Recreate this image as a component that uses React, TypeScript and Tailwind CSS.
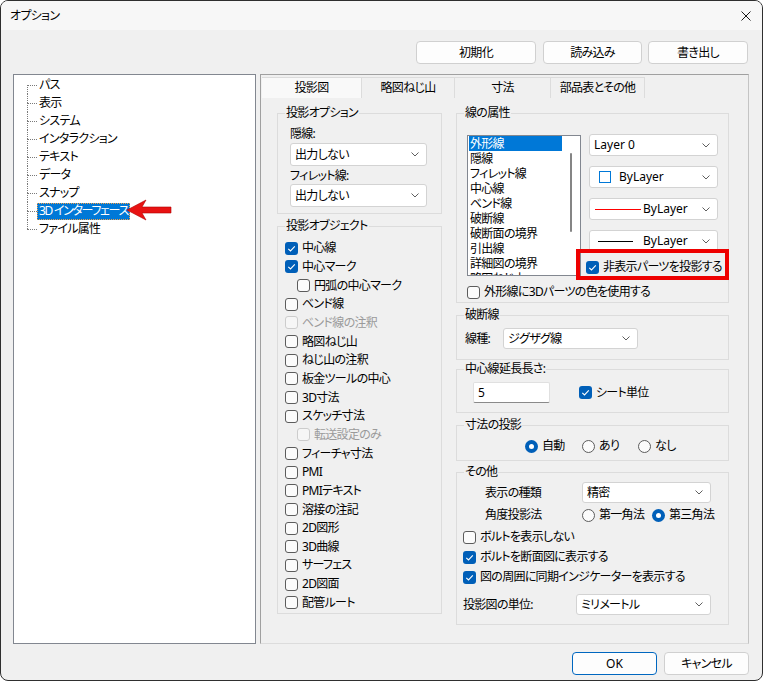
import React from "react";

const treeItems = ["パス", "表示", "システム", "インタラクション", "テキスト", "データ", "スナップ", "3D インターフェース", "ファイル属性"];

const objRows: { label: string; state?: "on" | "dis"; indent?: boolean }[] = [
  { label: "中心線", state: "on" },
  { label: "中心マーク", state: "on" },
  { label: "円弧の中心マーク", indent: true },
  { label: "ベンド線" },
  { label: "ベンド線の注釈", state: "dis" },
  { label: "略図ねじ山" },
  { label: "ねじ山の注釈" },
  { label: "板金ツールの中心" },
  { label: "3D寸法" },
  { label: "スケッチ寸法" },
  { label: "転送設定のみ", state: "dis", indent: true },
  { label: "フィーチャ寸法" },
  { label: "PMI" },
  { label: "PMIテキスト" },
  { label: "溶接の注記" },
  { label: "2D図形" },
  { label: "3D曲線" },
  { label: "サーフェス" },
  { label: "2D図面" },
  { label: "配管ルート" },
];

const lineTypes = ["外形線", "隠線", "フィレット線", "中心線", "ベンド線", "破断線", "破断面の境界", "引出線", "詳細図の境界", "略図ねじ山"];

function Chevron() {
  return (
    <svg width="8" height="5" viewBox="0 0 8 5" className="shrink-0">
      <path d="M0.5 0.5L4 4L7.5 0.5" fill="none" stroke="#5f5f5f" strokeWidth="1" />
    </svg>
  );
}

function Combo({ className, children }: { className: string; children: React.ReactNode }) {
  return (
    <div className={`flex items-center bg-white border border-[#d3d3d3] rounded-[3px] pl-[4px] pr-[7px] ${className}`}>
      <div className="flex-1 flex items-center whitespace-nowrap">{children}</div>
      <Chevron />
    </div>
  );
}

function Check({ label, state, className = "" }: { label: string; state?: "on" | "dis"; className?: string }) {
  const box =
    state === "on"
      ? "bg-[#005fb8]"
      : state === "dis"
      ? "border border-[#cccccc] bg-[#f6f6f6]"
      : "border border-[#5c5c5c] bg-[#fbfbfb]";
  return (
    <div className={`flex items-center ${className}`}>
      <span className={`w-[13px] h-[13px] rounded-[3px] flex items-center justify-center shrink-0 ${box}`}>
        {state === "on" && (
          <svg width="13" height="13" viewBox="0 0 13 13">
            <path d="M3.3 6.8L5.5 9L9.8 4.4" fill="none" stroke="white" strokeWidth="1.1" />
          </svg>
        )}
      </span>
      <span className={`ml-[4px] whitespace-nowrap ${state === "dis" ? "text-[#9a9a9a]" : ""}`}>{label}</span>
    </div>
  );
}

function Radio({ label, on, className = "" }: { label: string; on?: boolean; className?: string }) {
  return (
    <div className={`flex items-center ${className}`}>
      {on ? (
        <span className="w-[13px] h-[13px] rounded-full bg-[#005fb8] flex items-center justify-center shrink-0">
          <span className="w-[5px] h-[5px] rounded-full bg-white" />
        </span>
      ) : (
        <span className="w-[13px] h-[13px] rounded-full border border-[#5c5c5c] bg-[#fbfbfb] shrink-0" />
      )}
      <span className="ml-[4px] whitespace-nowrap">{label}</span>
    </div>
  );
}

// group box: legend sits on the border, content padding goes on the inner div
function Group({ title, className, inner, children }: { title: string; className: string; inner: string; children: React.ReactNode }) {
  return (
    <fieldset className={`border border-[#dcdcdc] min-w-0 ${className}`}>
      <legend className="ml-[7px] px-[1px] leading-[16px]">{title}</legend>
      <div className={inner}>{children}</div>
    </fieldset>
  );
}

function Button({ label, className }: { label: string; className: string }) {
  return (
    <div className={`h-[23px] flex items-center justify-center bg-[#fdfdfd] rounded-[4px] ${className}`}>{label}</div>
  );
}

export default function App() {
  return (
    <div className="w-[763px] h-[681px] bg-white">
      <div className="w-[763px] h-[681px] rounded-[8px] border border-[#2f2f2f] bg-[#f0f0f0] overflow-hidden flex flex-col text-[12px] leading-[16px] tracking-[-0.7px] text-black font-['Noto_Sans','Noto_Sans_CJK_JP',sans-serif] [font-feature-settings:'palt']">
        {/* title bar */}
        <div className="h-[29px] shrink-0 bg-[#f7f7f7] flex items-center justify-between pl-[9px] pr-[11px]">
          <span>オプション</span>
          <svg width="10" height="10" viewBox="0 0 10 10">
            <path d="M0.5 0.5L9.5 9.5M9.5 0.5L0.5 9.5" stroke="#1a1a1a" strokeWidth="1" />
          </svg>
        </div>

        <div className="flex flex-col pl-[12px] pr-[13px]">
          {/* top buttons */}
          <div className="flex justify-end mt-[11px] mr-[1px]">
            <Button label="初期化" className="w-[120px] border border-[#d0d0d0]" />
            <Button label="読み込み" className="w-[99px] ml-[7px] border border-[#d0d0d0]" />
            <Button label="書き出し" className="w-[100px] ml-[6px] border border-[#d0d0d0]" />
          </div>

          <div className="flex mt-[10px] h-[570px]">
            {/* tree */}
            <div className="relative w-[243px] h-[570px] bg-white border border-[#828790] pt-[1px] pl-[13px]">
              {treeItems.map((t, i) => {
                const first = i === 0;
                const last = i === treeItems.length - 1;
                const sel = i === 7;
                return (
                  <div key={t} className="flex h-[18px] items-center">
                    <div className="flex flex-col self-stretch w-[10px]">
                      <div className={`h-[9px] ${first ? "" : "border-l border-dotted border-[#7a7a7a]"}`} />
                      <div className={`h-[9px] border-t border-dotted border-[#7a7a7a] ${last ? "" : "border-l"}`} />
                    </div>
                    {sel ? (
                      <span className="h-[17px] flex items-center px-[1px] bg-[#0078d7] text-white border border-dotted border-[#f0a04a] whitespace-nowrap tracking-[-1.3px]">
                        {t}
                      </span>
                    ) : (
                      <span className="px-[2px] whitespace-nowrap">{t}</span>
                    )}
                  </div>
                );
              })}
              <svg width="46" height="22" viewBox="0 0 46 22" className="absolute left-[112px] top-[124px]">
                <polygon points="1,11 20,1 16,8 45,8 45,14 16,14 20,21" fill="#e81212" stroke="#b00000" strokeWidth="0.6" />
              </svg>
            </div>

            {/* tab frame */}
            <div className="ml-[4px] w-[489px] h-[570px] border border-[#a0a0a0] border-b-[#dcdcdc] border-r-[#c4c4c4] pt-[2px] pl-[1px] flex flex-col">
              <div className="flex h-[21px]">
                <div className="w-[100px] flex items-center justify-center bg-[#f9f9f9] border-t border-r border-[#dcdcdc]">投影図</div>
                <div className="w-[93px] flex items-center justify-center border-t border-r border-[#dcdcdc]">略図ねじ山</div>
                <div className="w-[96px] flex items-center justify-center border-t border-r border-[#dcdcdc]">寸法</div>
                <div className="w-[94px] flex items-center justify-center border-t border-r border-[#dcdcdc]">部品表とその他</div>
              </div>

              <div className="flex pl-[15px] pt-[7px]">
                {/* left column */}
                <div className="flex flex-col w-[165px]">
                  <Group title="投影オプション" className="h-[109px]" inner="pl-[12px] pr-[14px]">
                    <div className="mt-[5px]">隠線:</div>
                    <Combo className="mt-[1px] h-[23px]">出力しない</Combo>
                    <div className="mt-[2px]">フィレット線:</div>
                    <Combo className="h-[23px]">出力しない</Combo>
                  </Group>
                  <Group title="投影オブジェクト" className="mt-[4px] h-[396px]" inner="pl-[7px] pt-[5px]">
                    {objRows.map((r) => (
                      <Check key={r.label} label={r.label} state={r.state} className={`h-[18.67px] ${r.indent ? "ml-[12px]" : ""}`} />
                    ))}
                  </Group>
                </div>

                {/* right column */}
                <div className="flex flex-col w-[273px] ml-[14px]">
                  <Group title="線の属性" className="h-[198px]" inner="pl-[10px]">
                    <div className="flex items-start">
                      <div className="mt-[14px] w-[114px] h-[141px] border border-[#828790] bg-white flex overflow-hidden">
                        <div className="w-[94px] pl-[1px]">
                          {lineTypes.map((l, i) => (
                            <div key={l} className={`h-[15px] leading-[15px] flex items-center pl-[1px] whitespace-nowrap ${i === 0 ? "bg-[#0078d7] text-white" : ""}`}>
                              {l}
                            </div>
                          ))}
                        </div>
                        <div className="flex-1 flex justify-center">
                          <div className="mt-[17px] w-[2px] h-[79px] rounded-full bg-[#858585]" />
                        </div>
                      </div>
                      <div className="ml-[8px] mt-[13px] flex flex-col">
                        <Combo className="w-[129px] h-[22px]">
                          <span className="tracking-normal">Layer 0</span>
                        </Combo>
                        <Combo className="w-[129px] h-[22px] mt-[10px]">
                          <span className="ml-[5px] w-[12px] h-[12px] border border-[#0078d7]" />
                          <span className="ml-[8px] tracking-normal">ByLayer</span>
                        </Combo>
                        <Combo className="w-[129px] h-[22px] mt-[10px]">
                          <span className="ml-[1px] w-[46px] h-[1px] bg-[#ff0000]" />
                          <span className="ml-[2px] tracking-normal">ByLayer</span>
                        </Combo>
                        <Combo className="w-[129px] h-[22px] mt-[10px]">
                          <span className="ml-[4px] w-[35px] h-[1px] bg-black" />
                          <span className="ml-[10px] tracking-normal">ByLayer</span>
                        </Combo>
                        <div className="relative mt-[7px] -ml-[3px]">
                          <Check label="非表示パーツを投影する" state="on" className="h-[16px]" />
                          <div className="absolute -left-[10px] -top-[10px] w-[153px] h-[31px] border-4 border-[#ee0000]" />
                        </div>
                      </div>
                    </div>
                    <Check label="外形線に3Dパーツの色を使用する" className="mt-[8px] h-[16px]" />
                  </Group>

                  <Group title="破断線" className="mt-[4px] h-[53px]" inner="pl-[8px]">
                    <div className="flex items-center mt-[5px]">
                      <span className="w-[38px]">線種:</span>
                      <Combo className="w-[135px] h-[21px]">ジグザグ線</Combo>
                    </div>
                  </Group>

                  <Group title="中心線延長長さ:" className="mt-[1px] h-[52px]" inner="pl-[16px]">
                    <div className="flex items-center mt-[5px]">
                      <div className="w-[77px] h-[21px] bg-white border border-[#e0e0e0] border-b-[#8a8a8a] rounded-[2px] flex items-center pl-[4px]">5</div>
                      <Check label="シート単位" state="on" className="ml-[29px]" />
                    </div>
                  </Group>

                  <Group title="寸法の投影" className="mt-[4px] h-[44px]" inner="pl-[68px]">
                    <div className="flex items-center mt-[5px] h-[16px]">
                      <Radio label="自動" on className="w-[57px]" />
                      <Radio label="あり" className="w-[56px]" />
                      <Radio label="なし" />
                    </div>
                  </Group>

                  <Group title="その他" className="mt-[3px] h-[161px]" inner="pl-[6px]">
                    <div className="flex items-center mt-[2px] pl-[22px]">
                      <span className="w-[97px]">表示の種類</span>
                      <Combo className="w-[129px] h-[21px]">精密</Combo>
                    </div>
                    <div className="flex items-center mt-[4px] h-[16px] pl-[22px]">
                      <span className="w-[97px]">角度投影法</span>
                      <Radio label="第一角法" className="w-[70px]" />
                      <Radio label="第三角法" on />
                    </div>
                    <Check label="ボルトを表示しない" className="mt-[4px] h-[20px]" />
                    <Check label="ボルトを断面図に表示する" state="on" className="h-[20px]" />
                    <Check label="図の周囲に同期インジケーターを表示する" state="on" className="h-[20px]" />
                    <div className="flex items-center mt-[7px]">
                      <span className="w-[113px]">投影図の単位:</span>
                      <Combo className="w-[135px] h-[21px]">ミリメートル</Combo>
                    </div>
                  </Group>
                </div>
              </div>
            </div>
          </div>

          {/* bottom buttons */}
          <div className="flex justify-end mt-[8px]">
            <Button label="OK" className="w-[85px] border border-[#0067c0] tracking-normal" />
            <Button label="キャンセル" className="w-[85px] ml-[7px] border border-[#d0d0d0]" />
          </div>
        </div>
      </div>
    </div>
  );
}
